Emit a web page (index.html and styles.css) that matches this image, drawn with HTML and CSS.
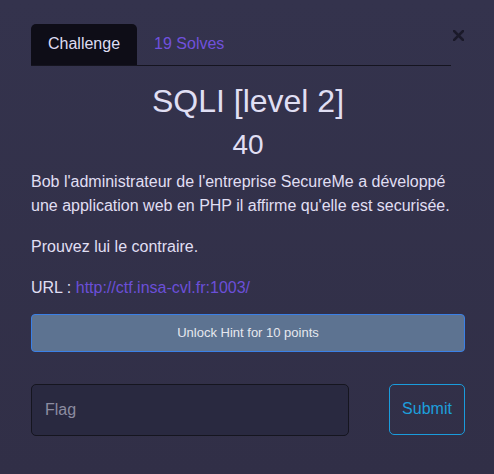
FILE: index.html
```html
<!DOCTYPE html>
<html lang="fr">
<head>
<meta charset="utf-8">
<title>SQLI [level 2]</title>
<link rel="stylesheet" href="styles.css">
</head>
<body>
<div class="modal">
  <div class="modal-header">
    <ul class="tabs">
      <li class="tab active">Challenge</li>
      <li class="tab">19 Solves</li>
    </ul>
    <button class="close" aria-label="Close">
      <svg width="11" height="11" viewBox="0 0 11 11"><path d="M1 1 L10 10 M10 1 L1 10" stroke="#1b1a2a" stroke-width="2.6" stroke-linecap="square"/></svg>
    </button>
  </div>
  <h2 class="title">SQLI [level 2]</h2>
  <h3 class="value">40</h3>
  <div class="description">
    <p>Bob l'administrateur de l'entreprise SecureMe a développé une application web en PHP il affirme qu'elle est securisée.</p>
    <p>Prouvez lui le contraire.</p>
    <p>URL : <a href="#">http://ctf.insa-cvl.fr:1003/</a></p>
  </div>
  <button class="hint">Unlock Hint for 10 points</button>
  <div class="submit-row">
    <input class="flag" type="text" placeholder="Flag">
    <button class="submit">Submit</button>
  </div>
</div>
</body>
</html>
```
FILE: styles.css
```css
html, body {
  margin: 0;
  padding: 0;
  height: 100%;
}
body {
  background: linear-gradient(#34334d, #312f47);
  font-family: "Liberation Sans", Arial, sans-serif;
  color: #e0dff3;
}
.modal {
  padding: 24px 29px 0 31px;
}
.modal-header {
  display: flex;
  align-items: flex-start;
}
.tabs {
  flex: 1;
  display: flex;
  list-style: none;
  margin: 0;
  padding: 0;
  border-bottom: 1px solid #15141f;
}
.tab {
  font-size: 16px;
  line-height: 24px;
  padding: 8px 17px 9px;
  color: #7051dc;
}
.tab.active {
  background: #0e0d17;
  color: #dedcf2;
  border-radius: 5px 5px 0 0;
}
.close {
  width: 14px;
  background: none;
  border: 0;
  padding: 6px 0 0 1px;
  margin: 0;
  line-height: 0;
}
.title {
  margin: 16px 0 8px;
  text-align: center;
  font-size: 32px;
  font-weight: 400;
  line-height: 1.2;
}
.value {
  margin: 0 0 8px;
  text-align: center;
  font-size: 28px;
  font-weight: 400;
  line-height: 1.2;
}
.description p {
  margin: 0 0 17px;
  font-size: 16px;
  line-height: 24px;
}
.description p:last-child {
  margin-bottom: 14px;
}
.description a {
  color: #6b4fd8;
  text-decoration: none;
}
.hint {
  display: block;
  width: 100%;
  height: 38px;
  box-sizing: border-box;
  background: #5d7391;
  border: 1px solid #3a80e6;
  border-radius: 4px;
  color: #e6e8ef;
  font-family: inherit;
  font-size: 13px;
  padding: 0;
}
.submit-row {
  display: flex;
  gap: 40px;
  margin-top: 32px;
  align-items: flex-start;
}
.flag {
  flex: 1;
  height: 52px;
  box-sizing: border-box;
  background: #292940;
  border: 1px solid #15151f;
  border-radius: 5px;
  padding: 0 13px;
  font-family: inherit;
  font-size: 16px;
  color: #e0dff3;
  outline: none;
}
.flag::placeholder {
  color: #8c8ca0;
}
.submit {
  width: 76px;
  height: 51px;
  box-sizing: border-box;
  background: transparent;
  border: 1px solid #1a9cdc;
  border-radius: 5px;
  color: #1d9fdc;
  font-family: inherit;
  font-size: 16px;
  padding: 0;
}
```
